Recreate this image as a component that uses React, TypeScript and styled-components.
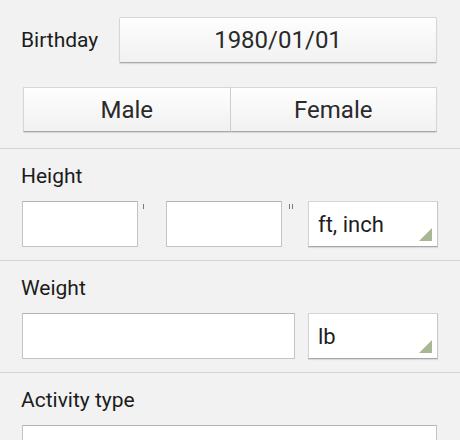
import styled, { createGlobalStyle } from "styled-components";

const GlobalStyle = createGlobalStyle`
  body {
    margin: 0;
    background: #f2f2f2;
    font-family: Roboto, "Liberation Sans", sans-serif;
    color: #222;
  }
`;

const Page = styled.div`
  width: 460px;
  height: 440px;
  overflow: hidden;
  background: #f2f2f2;
`;

const TopSection = styled.section`
  display: flex;
  flex-direction: column;
  gap: 24px;
  padding: 17px 23px 16px 21px;
  border-bottom: 1px solid #d3d3d3;
`;

const Section = styled.section`
  display: flex;
  flex-direction: column;
  gap: 13px;
  padding: 15px 22px 13px 21px;
  border-bottom: 1px solid #d3d3d3;
`;

const Row = styled.div`
  display: flex;
  align-items: center;
`;

const Label = styled.div`
  font-size: 21px;
  line-height: 24px;
  font-weight: 400;
  color: #1c1c1c;
`;

const InlineLabel = styled(Label)`
  width: 98px;
  flex: none;
`;

const Button = styled.div<{ $h?: number }>`
  flex: 1;
  height: ${(p) => p.$h ?? 46}px;
  box-sizing: border-box;
  display: flex;
  align-items: center;
  justify-content: center;
  font-size: 24px;
  color: #2a2a2a;
  background: linear-gradient(#fefefe, #f1f1f1);
  border: 1px solid #d6d6d6;
  border-bottom-color: #a9a9a9;
  border-radius: 2px;
  box-shadow: 0 1px 1px rgba(0, 0, 0, 0.12);
`;

const Segmented = styled.div`
  display: flex;
  margin-left: 2px;
  height: 45px;
  border-radius: 2px;
  box-shadow: 0 1px 1px rgba(0, 0, 0, 0.12);
  ${Button} {
    box-shadow: none;
    border-radius: 0;
  }
  ${Button} + ${Button} {
    border-left: none;
  }
  ${Button}:first-child {
    border-right: 1px solid #cdcdcd;
  }
`;

const Field = styled.div`
  flex: 1;
  height: 46px;
  box-sizing: border-box;
  background: #fff;
  border: 1px solid #c4c4c4;
  border-top-color: #b4b4b4;
`;

const FieldRow = styled.div`
  display: grid;
  grid-template-columns: 116px 28px 116px 26px 1fr;
  align-items: start;
  margin-left: 1px;
`;

/* small foot / inch ticks next to the height boxes */
const Mark = styled.span<{ $n: number }>`
  display: flex;
  gap: 2px;
  padding: 3px 0 0 ${(p) => (p.$n > 1 ? 7 : 5)}px;
  &::before,
  &::after {
    content: "";
    width: 1px;
    height: 5px;
    background: #7a7a7a;
  }
  &::after {
    display: ${(p) => (p.$n > 1 ? "block" : "none")};
  }
`;

const Select = styled.div`
  position: relative;
  width: 130px;
  flex: none;
  height: 46px;
  box-sizing: border-box;
  display: flex;
  align-items: center;
  padding-left: 9px;
  font-size: 22px;
  color: #1e1e1e;
  background: #fff;
  border: 1px solid #d4d4d4;
  border-bottom-color: #a8a8a8;
  border-right-color: #c8c8c8;
  box-shadow: 0 1px 1px rgba(0, 0, 0, 0.1);
`;

const Corner = styled.span`
  position: absolute;
  right: 5px;
  bottom: 5px;
  width: 0;
  height: 0;
  border-left: 13px solid transparent;
  border-bottom: 13px solid #a9b893;
`;

const WeightRow = styled.div`
  display: flex;
  gap: 13px;
  margin-left: 1px;
`;

const Wide = styled(Field)`
  flex: none;
  margin: 0 1px;
`;

export default function App() {
  return (
    <Page>
      <GlobalStyle />
      <TopSection>
        <Row>
          <InlineLabel>Birthday</InlineLabel>
          <Button>1980/01/01</Button>
        </Row>
        <Segmented>
          <Button $h={45}>Male</Button>
          <Button $h={45}>Female</Button>
        </Segmented>
      </TopSection>

      <Section>
        <Label>Height</Label>
        <FieldRow>
          <Field />
          <Mark $n={1} />
          <Field />
          <Mark $n={2} />
          <Select>
            ft, inch
            <Corner />
          </Select>
        </FieldRow>
      </Section>

      <Section>
        <Label>Weight</Label>
        <WeightRow>
          <Field />
          <Select>
            lb
            <Corner />
          </Select>
        </WeightRow>
      </Section>

      <Section>
        <Label>Activity type</Label>
        <Wide />
      </Section>
    </Page>
  );
}
